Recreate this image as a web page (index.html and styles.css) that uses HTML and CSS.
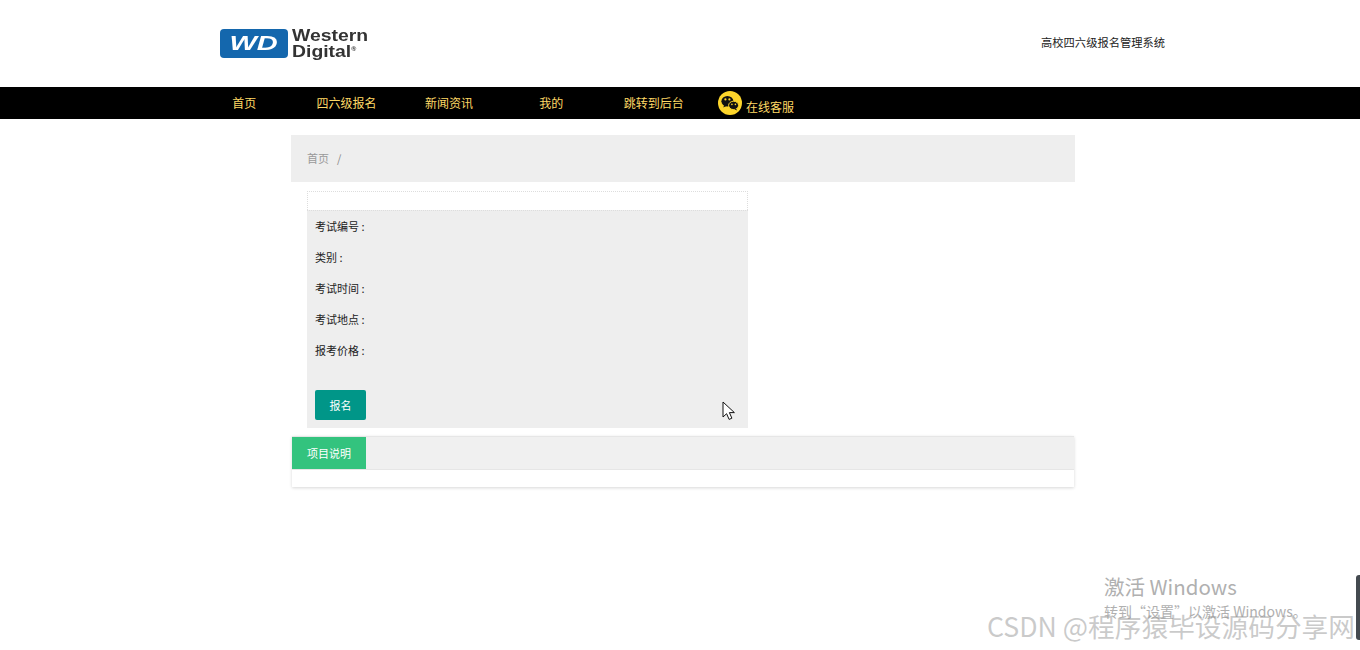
FILE: index.html
```html
<!DOCTYPE html>
<html lang="zh-CN">
<head>
<meta charset="utf-8">
<title>高校四六级报名管理系统</title>
<link rel="stylesheet" href="styles.css">
</head>
<body>
<header class="top">
  <div class="logo">
    <div class="logo-mark"><span class="logo-wd">WD</span></div>
    <div class="logo-name">Western<br>Digital<span class="logo-reg">®</span></div>
  </div>
  <div class="site-name">高校四六级报名管理系统</div>
</header>
<nav class="nav">
  <a class="nav-item">首页</a>
  <a class="nav-item">四六级报名</a>
  <a class="nav-item">新闻资讯</a>
  <a class="nav-item">我的</a>
  <a class="nav-item">跳转到后台</a>
  <a class="nav-service">
    <svg class="wechat" viewBox="0 0 24 24" width="24" height="24" aria-hidden="true">
      <circle cx="12" cy="12" r="12" fill="#fdd52b"/>
      <ellipse cx="9.4" cy="10.2" rx="6" ry="5.2" fill="#111"/>
      <path d="M6.2 14l-.9 2.6 3-1.5z" fill="#111"/>
      <ellipse cx="15.6" cy="14.4" rx="5" ry="4.2" fill="#111" stroke="#fdd52b" stroke-width="1"/>
      <path d="M18 17.4l1.1 2-2.8-1.2z" fill="#111"/>
      <circle cx="7.4" cy="8.4" r="1.1" fill="#fdd52b"/>
      <circle cx="11.4" cy="8.4" r="1.1" fill="#fdd52b"/>
      <circle cx="13.9" cy="13.4" r=".8" fill="#fdd52b"/>
      <circle cx="17.4" cy="13.4" r=".8" fill="#fdd52b"/>
    </svg>
    <span class="service-label">在线客服</span>
  </a>
</nav>
<main class="main">
  <div class="crumb"><span>首页</span><span class="crumb-sep">/</span></div>
  <section class="card">
    <div class="card-head"></div>
    <div class="card-body">
      <p class="row">考试编号 :</p>
      <p class="row">类别 :</p>
      <p class="row">考试时间 :</p>
      <p class="row">考试地点 :</p>
      <p class="row">报考价格 :</p>
      <button class="btn" type="button">报名</button>
    </div>
  </section>
  <section class="tabs">
    <div class="tab-bar"><div class="tab-active">项目说明</div></div>
    <div class="tab-content"></div>
  </section>
</main>
<svg class="cursor" viewBox="0 0 14 20" width="14" height="20" aria-hidden="true">
  <path d="M1 1v15l3.6-3.3 2.5 5.7 2.8-1.2-2.5-5.6h5z" fill="#fff" stroke="#111" stroke-width="1"/>
</svg>
<div class="activate">
  <div class="activate-title">激活 Windows</div>
  <div class="activate-sub">转到“设置”以激活 Windows。</div>
</div>
<div class="csdn">CSDN @程序猿毕设源码分享网</div>
<div class="edge-tab"></div>
</body>
</html>
```
FILE: styles.css
```css
* { box-sizing: border-box; }
html, body { margin: 0; padding: 0; }
body {
  width: 1360px;
  height: 650px;
  overflow: hidden;
  background: #fff;
  color: #222;
  font-family: "Noto Sans CJK SC", "Liberation Sans", sans-serif;
  font-size: 12px;
  position: relative;
}
.top {
  height: 87px;
  display: flex;
  align-items: center;
  justify-content: space-between;
  padding: 0 195px 4px 220px;
}
.logo {
  display: flex;
  align-items: center;
  gap: 4px;
  margin-top: 4px;
  filter: blur(.4px);
}
.logo-mark {
  width: 68px;
  height: 29px;
  border-radius: 4px;
  background: #1467ad;
  color: #fff;
  display: flex;
  align-items: center;
  justify-content: center;
}
.logo-wd {
  display: block;
  font: italic 700 20px/29px "Liberation Sans", sans-serif;
  transform: scaleX(1.45);
}
.logo-name {
  color: #333;
  font: 700 17px/12.5px "Liberation Sans", sans-serif;
  margin-top: 1px;
  transform: scaleX(1.14);
  transform-origin: left center;
  white-space: nowrap;
}
.logo-reg { font-size: 6px; vertical-align: 6px; }
.site-name { color: #222; font-size: 11.27px; line-height: 16px; }
.nav {
  height: 32px;
  background: #000;
  display: flex;
  padding-left: 193px;
  color: #ffd966;
}
.nav-item {
  width: 102.4px;
  text-align: center;
  line-height: 32px;
}
.nav-service {
  display: flex;
  align-items: flex-start;
  gap: 4px;
  margin-left: 13px;
  padding-top: 4px;
}
.wechat { display: block; }
.service-label { line-height: 16px; margin-top: 8px; }
.main {
  width: 784px;
  margin-left: 291px;
  padding-top: 16px;
}
.crumb {
  height: 47px;
  padding: 0 0 2px 16px;
  background: #eee;
  color: #999;
  font-size: 11px;
  display: flex;
  align-items: center;
  gap: 8px;
}
.crumb-sep { color: #888; }
.card {
  width: 441px;
  margin: 9px 0 0 16px;
}
.card-head {
  height: 19px;
  border: 1px dotted #ddd;
  border-bottom: 0;
}
.card-body {
  height: 218px;
  padding: 0 8px;
  background: #eee;
  border-top: 1px dotted #ddd;
}
.row {
  margin: 0;
  height: 31px;
  line-height: 31px;
  font-size: 11px;
  color: #222;
}
.btn {
  display: block;
  width: 51px;
  height: 30px;
  margin-top: 24px;
  padding: 0;
  border: 0;
  border-radius: 2px;
  background: #009688;
  color: #fff;
  font-family: inherit;
  font-size: 11px;
}
.tabs {
  width: 782px;
  height: 51px;
  margin: 8px 0 0 1px;
  background: #fff;
  box-shadow: 0 1px 3px rgba(0,0,0,.16);
}
.tab-bar {
  height: 34px;
  background: #f0f0f0;
  border-top: 1px solid #e6e6e6;
  border-bottom: 1px solid #e6e6e6;
}
.tab-active {
  width: 74px;
  height: 32px;
  background: #33c37e;
  color: #fff;
  font-size: 11px;
  line-height: 32px;
  text-align: center;
}
.tab-content { height: 17px; }
.cursor { position: absolute; left: 722px; top: 401px; }
.activate {
  position: absolute;
  left: 1104px;
  top: 573px;
  color: #b0b0b0;
}
.activate-title { font-size: 20.5px; line-height: 26px; }
.activate-sub { font-size: 14px; line-height: 20px; margin-top: 2px; }
.csdn {
  position: absolute;
  left: 987px;
  top: 609px;
  color: rgba(150,150,150,.5);
  font-size: 26.7px;
  line-height: 34px;
  white-space: nowrap;
}
.edge-tab {
  position: absolute;
  left: 1356px;
  top: 575px;
  width: 4px;
  height: 65px;
  background: #444a50;
  border-radius: 3px 0 0 3px;
}
```
